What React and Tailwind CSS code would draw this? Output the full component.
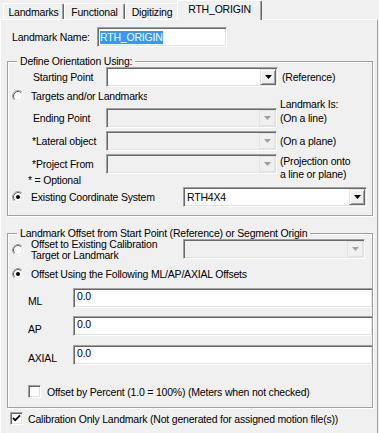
import React from "react";

const sunken =
  "border border-t-[#a0a0a0] border-l-[#a0a0a0] border-r-white border-b-white shadow-[inset_1px_1px_0_#696969,inset_-1px_-1px_0_#e3e3e3]";

function DropBtn({ disabled }) {
  return (
    <div
      className={
        disabled
          ? "w-[16px] h-full flex items-center justify-center bg-[#f0f0f0] border border-[#e3e3e3]"
          : "w-[16px] h-full flex items-center justify-center bg-[#f0f0f0] border border-t-[#e3e3e3] border-l-[#e3e3e3] border-r-[#696969] border-b-[#696969] shadow-[inset_1px_1px_0_#fff,inset_-1px_-1px_0_#a0a0a0]"
      }
    >
      <svg width="7" height="4" viewBox="0 0 7 4">
        <path d="M0 0h7L3.5 4z" fill={disabled ? "#a0a0a0" : "#000"} />
      </svg>
    </div>
  );
}

function Select({ w, value, disabled }) {
  return (
    <div
      className={
        (disabled ? "bg-[#f0f0f0] " : "bg-white ") +
        sunken +
        " h-[20px] p-[1px] flex shrink-0"
      }
      style={{ width: w }}
    >
      <div className="flex-1 flex items-center pl-[2px] overflow-hidden whitespace-nowrap">
        {value}
      </div>
      <DropBtn disabled={disabled} />
    </div>
  );
}

function Radio({ checked }) {
  return (
    <svg width="12" height="12" viewBox="0 0 12 12" className="shrink-0">
      <circle cx="6" cy="6" r="4.5" fill="#fff" />
      <path d="M2.11 9.89A5.5 5.5 0 0 1 9.89 2.11" fill="none" stroke="#a0a0a0" />
      <path d="M9.89 2.11A5.5 5.5 0 0 1 2.11 9.89" fill="none" stroke="#fff" />
      <path d="M2.82 9.18A4.5 4.5 0 0 1 9.18 2.82" fill="none" stroke="#696969" />
      <path d="M9.18 2.82A4.5 4.5 0 0 1 2.82 9.18" fill="none" stroke="#e3e3e3" />
      {checked && <circle cx="6" cy="6" r="2" fill="#000" />}
    </svg>
  );
}

function Check({ checked }) {
  return (
    <div className={"w-[13px] h-[13px] bg-white shrink-0 " + sunken}>
      {checked && (
        <svg width="11" height="11" viewBox="0 0 11 11">
          <path d="M2 5L4.2 7.2L9 2.4" fill="none" stroke="#000" strokeWidth="1.8" />
        </svg>
      )}
    </div>
  );
}

function Group({ title, children, className }) {
  return (
    <fieldset
      className={
        "border border-[#a0a0a0] shadow-[inset_1px_1px_0_#fff,1px_1px_0_#fff] " +
        className
      }
    >
      <legend className="ml-[9px] px-[3px] leading-[12px] bg-[#f0f0f0]">{title}</legend>
      {children}
    </fieldset>
  );
}

function Tab({ label, w }) {
  return (
    <div
      className="h-[16px] border-t border-l border-r border-t-white border-l-white border-r-[#696969] shadow-[inset_-1px_0_0_#a0a0a0] rounded-t-[2px] text-center pt-[2px] leading-[12px] shrink-0"
      style={{ width: w }}
    >
      {label}
    </div>
  );
}

export default function App() {
  return (
    <div className="w-[379px] h-[433px] overflow-hidden bg-[#f0f0f0] font-['Liberation_Sans',Arial,sans-serif] text-[10.5px] tracking-[-0.2px] leading-[12px] text-black">
      <div className="flex items-end h-[19px] pl-[3px]">
        <Tab label="Landmarks" w={61} />
        <Tab label="Functional" w={61} />
        <Tab label="Digitizing" w={54} />
        <div className="relative z-10 ml-[-2px] mb-[-1px] w-[85px] h-[20px] bg-[#f0f0f0] border-t border-l border-r border-t-white border-l-white border-r-[#696969] shadow-[inset_-1px_0_0_#a0a0a0] rounded-t-[2px] text-center pt-[2px] shrink-0">
          RTH_ORIGIN
        </div>
      </div>

      <div className="w-[378px] h-[414px] border-t border-l border-r border-t-white border-l-white border-r-[#a0a0a0] pl-[6px] pr-[4px] pt-[7px]">
        {/* Name row */}
        <div className="flex items-center h-[20px]">
          <div className="ml-[5px] w-[85px] whitespace-nowrap">Landmark Name:</div>
          <div className={"w-[130px] h-[20px] bg-white flex items-center pl-[2px] " + sunken}>
            <span className="bg-[#3399ff] text-white leading-[13px]">RTH_ORIGIN</span>
          </div>
        </div>

        {/* Group 1 */}
        <Group title="Define Orientation Using:" className="mt-[8px] pb-[8px]">
          <div className="flex items-center h-[20px]">
            <div className="w-[98px] pl-[25px] whitespace-nowrap">Starting Point</div>
            <Select w={172} value="" />
            <div className="ml-[4px] whitespace-nowrap">(Reference)</div>
          </div>

          <div className="flex items-end h-[21px]">
            <div className="w-[272px] flex items-center h-[12px] mb-[6px]">
              <div className="ml-[4px]">
                <Radio />
              </div>
              <div className="ml-[7px] w-[116px] overflow-hidden whitespace-nowrap">
                Targets and/or Landmarks
              </div>
            </div>
            <div className="mb-[-2px] whitespace-nowrap">Landmark Is:</div>
          </div>

          <div className="flex items-center h-[20px]">
            <div className="w-[98px] pl-[25px] whitespace-nowrap">Ending Point</div>
            <Select w={171} value="" disabled />
            <div className="ml-[3px] whitespace-nowrap">(On a line)</div>
          </div>

          <div className="flex items-center h-[20px] mt-[3px]">
            <div className="w-[98px] pl-[24px] whitespace-nowrap">*Lateral object</div>
            <Select w={171} value="" disabled />
            <div className="ml-[3px] whitespace-nowrap">(On a plane)</div>
          </div>

          <div className="flex items-start h-[20px] mt-[3px]">
            <div className="w-[98px] pl-[24px] whitespace-nowrap self-center">*Project From</div>
            <Select w={171} value="" disabled />
            <div className="ml-[3px] mt-[1px] whitespace-nowrap leading-[13px]">
              (Projection onto
              <br />
              a line or plane)
            </div>
          </div>

          <div className="h-[12px] pl-[20px] whitespace-nowrap">* = Optional</div>

          <div className="flex items-center h-[20px] mt-[1px]">
            <div className="w-[175px] flex items-center">
              <div className="ml-[4px]">
                <Radio checked />
              </div>
              <div className="ml-[7px] whitespace-nowrap">Existing Coordinate System</div>
            </div>
            <Select w={184} value="RTH4X4" />
          </div>
        </Group>

        {/* Group 2 */}
        <Group
          title="Landmark Offset from Start Point (Reference) or Segment Origin"
          className="mt-[11px] pb-[9px]"
        >
          <div className="flex items-start h-[20px]">
            <div className="w-[175px] h-[22px] flex items-center">
              <div className="ml-[4px]">
                <Radio />
              </div>
              <div className="ml-[7px] whitespace-nowrap leading-[11px]">
                Offset to Existing Calibration
                <br />
                Target or Landmark
              </div>
            </div>
            <Select w={182} value="" disabled />
          </div>

          <div className="flex items-center h-[18px] mt-[6px]">
            <div className="ml-[4px]">
              <Radio checked />
            </div>
            <div className="ml-[7px] whitespace-nowrap">
              Offset Using the Following ML/AP/AXIAL Offsets
            </div>
          </div>

          {[
            ["ML", "mt-[5px]"],
            ["AP", "mt-[8px]"],
            ["AXIAL", "mt-[9px]"],
          ].map(([l, m]) => (
            <div key={l} className={"flex h-[20px] " + m}>
              <div className="w-[65px] pl-[20px] pt-[7px]">{l}</div>
              <div className={"flex-1 h-[20px] bg-white pl-[3px] pt-[1px] border-r-0 " + sunken}>
                0.0
              </div>
            </div>
          ))}

          <div className="flex items-center h-[13px] mt-[20px]">
            <div className="ml-[20px]">
              <Check />
            </div>
            <div className="ml-[6px] whitespace-nowrap">
              Offset by Percent (1.0 = 100%) (Meters when not checked)
            </div>
          </div>
        </Group>

        <div className="flex items-center h-[13px] mt-[4px]">
          <div className="ml-[3px]">
            <Check checked />
          </div>
          <div className="ml-[5px] whitespace-nowrap">
            Calibration Only Landmark (Not generated for assigned motion file(s))
          </div>
        </div>
      </div>
    </div>
  );
}
